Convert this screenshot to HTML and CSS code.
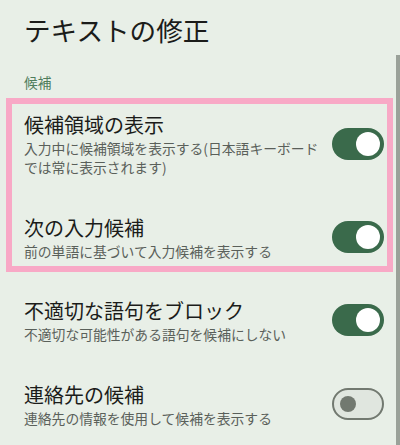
FILE: index.html
```html
<!DOCTYPE html>
<html lang="ja">
<head>
<meta charset="utf-8">
<link rel="stylesheet" href="styles.css">
</head>
<body>
<div class="screen">
  <h1 class="page-title">テキストの修正</h1>
  <div class="section-label">候補</div>
  <div class="group">
    <div class="item">
      <div class="text">
        <div class="title">候補領域の表示</div>
        <div class="summary">入力中に候補領域を表示する(日本語キーボードでは常に表示されます)</div>
      </div>
      <span class="switch on"><span class="thumb"></span></span>
    </div>
    <div class="item">
      <div class="text">
        <div class="title">次の入力候補</div>
        <div class="summary">前の単語に基づいて入力候補を表示する</div>
      </div>
      <span class="switch on"><span class="thumb"></span></span>
    </div>
    <div class="highlight"></div>
  </div>
  <div class="item">
    <div class="text">
      <div class="title">不適切な語句をブロック</div>
      <div class="summary">不適切な可能性がある語句を候補にしない</div>
    </div>
    <span class="switch on"><span class="thumb"></span></span>
  </div>
  <div class="item">
    <div class="text">
      <div class="title">連絡先の候補</div>
      <div class="summary">連絡先の情報を使用して候補を表示する</div>
    </div>
    <span class="switch off"><span class="thumb"></span></span>
  </div>
  <div class="scrollbar"></div>
</div>
</body>
</html>
```

FILE: styles.css
```css
html, body {
  margin: 0;
  padding: 0;
  background: #e8efe7;
}
body {
  font-family: "Noto Sans CJK JP", "Noto Sans", sans-serif;
  color: #1b1c1a;
}
.screen {
  position: relative;
  width: 400px;
  height: 445px;
  overflow: hidden;
  display: flex;
  flex-direction: column;
}
.page-title {
  margin: 12px 0 0 24px;
  font-size: 26.6px;
  line-height: 36px;
  font-weight: 400;
  color: #1b1c1a;
}
.section-label {
  margin: 24px 0 0 24px;
  font-size: 13.7px;
  line-height: 20px;
  color: #4f7d5c;
}
.group {
  position: relative;
}
.item {
  flex: none;
  display: flex;
  align-items: center;
  gap: 6px;
  padding: 17.5px 16px 17.5px 24px;
}
.text {
  flex: 1;
  min-width: 0;
}
.title {
  font-size: 20px;
  line-height: 29px;
  color: #1b1c1a;
}
.summary {
  font-size: 13.8px;
  line-height: 19.5px;
  color: #5a605a;
}
.switch {
  position: relative;
  flex: none;
  width: 52px;
  height: 32px;
  box-sizing: border-box;
  border-radius: 16px;
}
.switch.on {
  background: #3a6a4b;
}
.switch.off {
  background: #e0e6df;
  border: 2px solid #727970;
}
.thumb {
  position: absolute;
  border-radius: 50%;
}
.switch.on .thumb {
  width: 24px;
  height: 24px;
  top: 4px;
  right: 4px;
  background: #ffffff;
}
.switch.off .thumb {
  width: 16px;
  height: 16px;
  top: 6px;
  left: 6px;
  background: #727970;
}
.highlight {
  position: absolute;
  top: 6px;
  bottom: 7px;
  left: 6px;
  right: 7px;
  border: 6px solid #f8a9c6;
  pointer-events: none;
}
.scrollbar {
  position: absolute;
  top: 55px;
  right: 0;
  bottom: 0;
  width: 4px;
  background: #9aa199;
}
```
